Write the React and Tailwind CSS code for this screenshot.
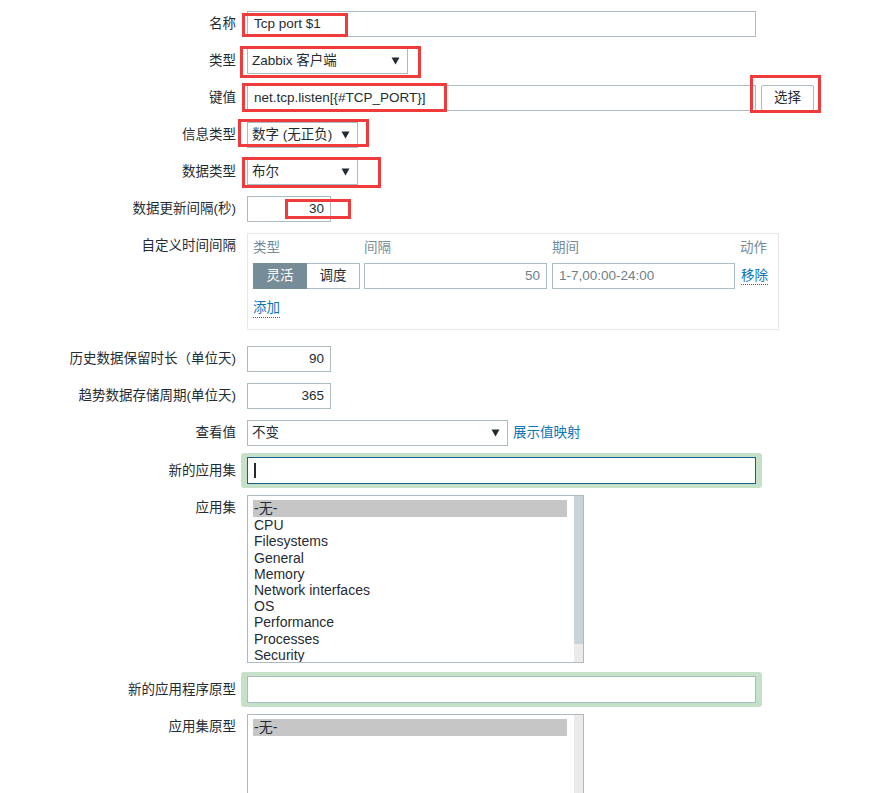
import React from 'react'

const APPS = ['CPU', 'Filesystems', 'General', 'Memory', 'Network interfaces', 'OS', 'Performance', 'Processes', 'Security']

/* red annotation frames drawn over the form */
const MARKS = [
  'left-[242px] top-[13px] w-[106px] h-[24px]',
  'left-[240px] top-[46px] w-[181px] h-[32px]',
  'left-[242px] top-[83px] w-[205px] h-[29px]',
  'left-[750px] top-[75px] w-[71px] h-[38px]',
  'left-[238px] top-[119px] w-[131px] h-[28px]',
  'left-[242px] top-[157px] w-[139px] h-[31px]',
  'left-[285px] top-[199px] w-[66px] h-[20px]',
]

function Row({ label, children, className = '', labelClass = 'leading-[26px]' }) {
  return (
    <div className={`flex ${className}`}>
      <div className={`w-[236px] shrink-0 text-right whitespace-nowrap ${labelClass}`}>{label}</div>
      <div className="ml-[11px] flex-1">{children}</div>
    </div>
  )
}

function Arrow() {
  return (
    <svg width="9" height="8" viewBox="0 0 9 8" className="shrink-0">
      <polygon points="0.5,0.5 8.5,0.5 4.5,7.5" fill="#1f2c33" />
    </svg>
  )
}

function Select({ value, className }) {
  return (
    <div className={`flex h-[26px] items-center justify-between border border-[#acbbc2] bg-white pl-[4px] pr-[7px] ${className}`}>
      <span>{value}</span>
      <Arrow />
    </div>
  )
}

function Input({ value, className = '', align = 'left' }) {
  return (
    <div
      className={`flex h-[26px] items-center border border-[#acbbc2] bg-white px-[6px] ${
        align === 'right' ? 'justify-end' : ''
      } ${className}`}
    >
      {value}
    </div>
  )
}

function ListBox({ items, thumb }) {
  return (
    <div className="flex h-[168px] w-[337px] border border-[#acbbc2] bg-white">
      <div className="flex-1 overflow-hidden pl-[5px] pr-[7px] pt-[4px] text-[14px] leading-[16.2px]">
        <div className="h-[17px] bg-[#c6c6c6] pl-[1px] leading-[17px]">-无-</div>
        {items.map((a) => (
          <div key={a} className="pl-[1px]">{a}</div>
        ))}
      </div>
      <div className="flex w-[9px] flex-col bg-[#ebebeb]">
        {thumb && <div className="h-[148px] bg-[#c9d3da]" />}
      </div>
    </div>
  )
}

export default function App() {
  return (
    <div
      className="relative min-h-[793px] w-[891px] bg-white pt-[11px] text-[13.5px] text-[#1f2c33]"
      style={{ fontFamily: '"Liberation Sans", "Noto Sans CJK SC", sans-serif' }}
    >
      <Row label="名称">
        <Input value="Tcp port $1" className="w-[509px]" />
      </Row>

      <Row label="类型" className="mt-[11px]">
        <Select value="Zabbix 客户端" className="w-[161px]" />
      </Row>

      <Row label="键值" className="mt-[11px]">
        <div className="flex gap-[5px]">
          <Input value="net.tcp.listen[{#TCP_PORT}]" className="w-[509px]" />
          <button className="h-[26px] w-[53px] rounded-[2px] border border-[#acbbc2] bg-white text-[#1f2c33]">
            选择
          </button>
        </div>
      </Row>

      <Row label="信息类型" className="mt-[11px]">
        <Select value="数字 (无正负)" className="w-[111px]" />
      </Row>

      <Row label="数据类型" className="mt-[11px]">
        <Select value="布尔" className="w-[111px]" />
      </Row>

      <Row label="数据更新间隔(秒)" className="mt-[11px]">
        <Input value="30" align="right" className="w-[84px]" />
      </Row>

      <Row label="自定义时间间隔" className="mt-[11px]">
        <div className="w-[532px] border border-[#e4e9ec] pb-[11px] pl-[5px] pt-[5px]">
          <div className="flex leading-[18px] text-[#768d99]">
            <span className="w-[111px]">类型</span>
            <span className="w-[188px]">间隔</span>
            <span className="w-[188px]">期间</span>
            <span>动作</span>
          </div>
          <div className="mt-[6px] flex items-center">
            <div className="flex h-[26px] w-[107px]">
              <span className="flex w-[54px] items-center justify-center border border-[#768d99] bg-[#768d99] text-white">
                灵活
              </span>
              <span className="flex w-[53px] items-center justify-center border border-l-0 border-[#acbbc2] bg-white">
                调度
              </span>
            </div>
            <Input value="50" align="right" className="ml-[4px] w-[183px] text-[#6f7f88]" />
            <Input value="1-7,00:00-24:00" className="ml-[5px] w-[183px] text-[#6f7f88]" />
            <span className="ml-[6px] border-b border-dotted border-[#0a76b7] leading-[17px] text-[#0a76b7]">
              移除
            </span>
          </div>
          <span className="mt-[10px] inline-block border-b border-dotted border-[#0a76b7] leading-[18px] text-[#0a76b7]">
            添加
          </span>
        </div>
      </Row>

      <Row label="历史数据保留时长（单位天)" className="mt-[16px]">
        <Input value="90" align="right" className="w-[84px]" />
      </Row>

      <Row label="趋势数据存储周期(单位天)" className="mt-[11px]">
        <Input value="365" align="right" className="w-[84px]" />
      </Row>

      <Row label="查看值" className="mt-[11px]">
        <div className="flex items-center gap-[5px]">
          <Select value="不变" className="w-[261px]" />
          <span className="text-[#0a76b7]">展示值映射</span>
        </div>
      </Row>

      <Row label="新的应用集" className="mt-[7px]" labelClass="leading-[35px]">
        <div className="-ml-[6px] w-[521px] rounded-[3px] bg-[#c5e2c8] px-[6px] py-[4px]">
          <div className="flex h-[27px] items-center border border-[#16608c] bg-white px-[6px]">
            <span className="h-[15px] w-[2px] bg-[#1f2c33]" />
          </div>
        </div>
      </Row>

      <Row label="应用集" className="mt-[7px]">
        <ListBox items={APPS} thumb />
      </Row>

      <Row label="新的应用程序原型" className="mt-[9px]" labelClass="leading-[35px]">
        <div className="-ml-[6px] w-[521px] rounded-[3px] bg-[#c5e2c8] px-[6px] py-[4px]">
          <div className="h-[27px] border border-[#acbbc2] bg-white" />
        </div>
      </Row>

      <Row label="应用集原型" className="mt-[7px]">
        <ListBox items={[]} />
      </Row>

      {MARKS.map((m) => (
        <div key={m} className={`pointer-events-none absolute border-[3px] border-[#ef3b3b] ${m}`} />
      ))}
    </div>
  )
}
